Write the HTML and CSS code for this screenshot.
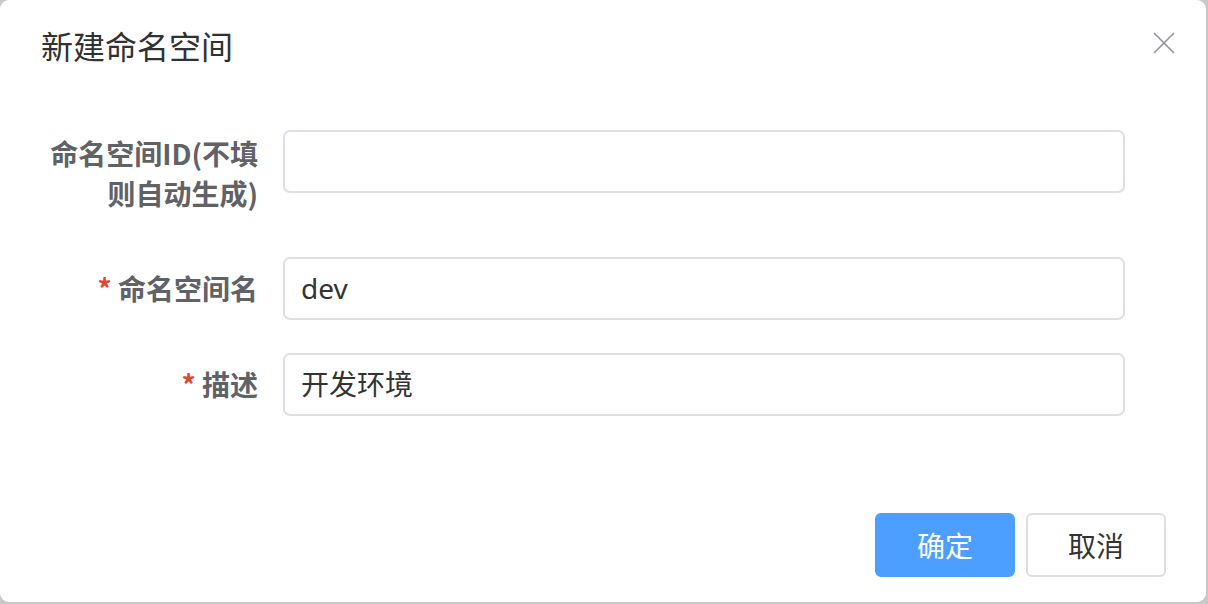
FILE: index.html
```html
<!DOCTYPE html>
<html lang="zh">
<head>
<meta charset="utf-8">
<title>新建命名空间</title>
<link rel="stylesheet" href="styles.css">
</head>
<body>
<div class="dialog">
  <div class="header">
    <span class="title">新建命名空间</span>
    <button class="close" aria-label="关闭">
      <svg width="22" height="22" viewBox="0 0 22 22"><path d="M1 1 L21 21 M21 1 L1 21" stroke="#909399" stroke-width="1.6" fill="none"/></svg>
    </button>
  </div>
  <div class="body">
    <div class="row row-wrap">
      <label class="label label-wrap">命名空间ID(不填则自动生成)</label>
      <div class="input"></div>
    </div>
    <div class="row">
      <label class="label"><span class="star">*</span> 命名空间名</label>
      <div class="input">dev</div>
    </div>
    <div class="row">
      <label class="label"><span class="star">*</span> 描述</label>
      <div class="input">开发环境</div>
    </div>
  </div>
  <div class="footer">
    <button class="btn btn-primary">确定</button>
    <button class="btn">取消</button>
  </div>
</div>
</body>
</html>
```
FILE: styles.css
```css
html, body {
  margin: 0;
  padding: 0;
}
body {
  width: 1208px;
  height: 604px;
  background: #c8c8c8;
  font-family: "Noto Sans", "Noto Sans CJK SC", sans-serif;
  overflow: hidden;
}
.dialog {
  box-sizing: border-box;
  width: 1206px;
  height: 602px;
  background: #fff;
  border-radius: 9px;
  display: flex;
  flex-direction: column;
  position: relative;
}
.header {
  padding: 25px 42px 0 41px;
  height: 40px;
  display: flex;
  align-items: center;
}
.title {
  font-size: 32px;
  line-height: 40px;
  color: #303133;
  font-family: "Noto Sans CJK SC", sans-serif;
}
.close {
  position: absolute;
  top: 32px;
  right: 31px;
  padding: 0;
  border: 0;
  background: none;
  width: 22px;
  height: 22px;
  display: flex;
}
.body {
  padding-top: 65px;
  display: flex;
  flex-direction: column;
  gap: 33px;
}
.row {
  display: flex;
  align-items: flex-start;
}
.label {
  box-sizing: border-box;
  width: 283px;
  padding-right: 25px;
  text-align: right;
  font-size: 28px;
  line-height: 62px;
  font-weight: bold;
  color: #606266;
  font-family: "Noto Sans CJK SC", sans-serif;
  white-space: nowrap;
}
.label-wrap {
  white-space: normal;
  line-height: 40px;
  padding-top: 3px;
  padding-bottom: 11px;
  padding-left: 40px;
}
.star {
  color: #dd4a34;
  margin-right: 0;
}
.input {
  box-sizing: border-box;
  width: 842px;
  height: 63px;
  border: 2px solid #dcdfe6;
  border-radius: 7px;
  padding: 0 16px;
  font-size: 28px;
  line-height: 59px;
  color: #333;
  font-family: "Noto Sans", "Noto Sans CJK SC", sans-serif;
}
.footer {
  margin-top: auto;
  padding: 0 40px 25px 0;
  display: flex;
  justify-content: flex-end;
  gap: 11px;
}
.btn {
  box-sizing: border-box;
  width: 140px;
  height: 64px;
  border: 2px solid #dcdfe6;
  border-radius: 6px;
  background: #fff;
  color: #333;
  font-size: 28px;
  font-family: "Noto Sans CJK SC", sans-serif;
  padding: 0;
}
.btn-primary {
  background: #4c9ffe;
  border-color: #4c9ffe;
  color: #fff;
}
```
